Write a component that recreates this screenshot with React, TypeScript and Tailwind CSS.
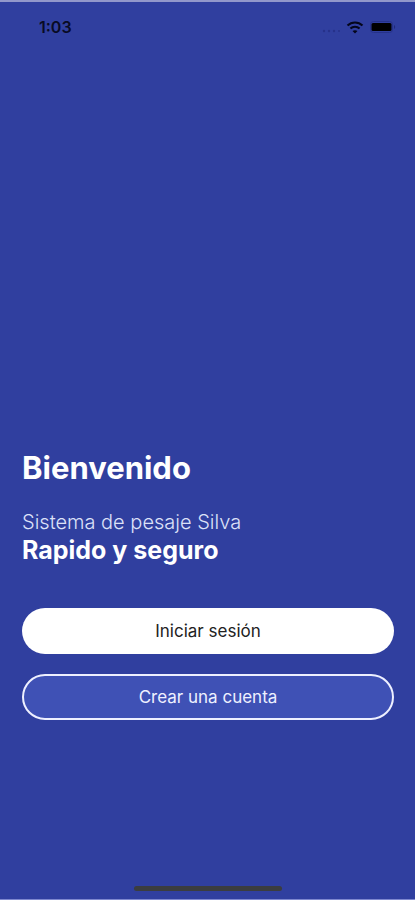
import React from 'react';

interface ActionButtonProps {
    children: string;
    className?: string;
}

const ActionButton: React.FC<ActionButtonProps> = ({ children, className }) => {
    return (
        <button type="button" className={`h-[46px] w-full rounded-full text-[17px] leading-6 ${className}`}>
            {children}
        </button>
    )
}

const StatusBar: React.FC = () => {
    return (
        <header className="flex h-[50px] items-center justify-between pr-[19px] pl-[39px] text-[#080b24]">
            <time className="text-base leading-5 font-semibold">1:03</time>
            <div className="flex items-center gap-1.5">
                <svg width="18" height="6" viewBox="0 0 18 6" className="mt-2" fill="#26328a" aria-hidden="true">
                    <circle cx="2" cy="3" r="1.2" />
                    <circle cx="7" cy="3" r="1.2" />
                    <circle cx="12" cy="3" r="1.2" />
                    <circle cx="17" cy="3" r="1" />
                </svg>
                <svg width="18" height="13" viewBox="0 0 17 13" fill="none" stroke="#04061a" strokeWidth="2.1" aria-hidden="true">
                    <path d="M1 4.6C5.2 .4 11.8 .4 16 4.6" />
                    <path d="M3.9 7.6C6.5 5.1 10.5 5.1 13.1 7.6" />
                    <path d="M8.5 12.6 6 10.1C7.4 8.8 9.6 8.8 11 10.1Z" fill="#04061a" stroke="none" />
                </svg>
                <svg width="26" height="12" viewBox="0 0 26 12" aria-hidden="true">
                    <rect x=".5" y=".5" width="22" height="11" rx="3" fill="none" stroke="#26328a" />
                    <rect x="1.5" y="2" width="20" height="8" rx="1.5" fill="#000" />
                    <path d="M24 4c1.6.6 1.6 3.4 0 4Z" fill="#202b7c" />
                </svg>
            </div>
        </header>
    )
}

const App: React.FC = () => {
    return (
        <div className="flex min-h-screen flex-col border-t-2 border-b border-t-[#9298cb] border-b-[#7e88cf] bg-[#303f9f] font-['Inter','Liberation_Sans',sans-serif] text-white">
            <StatusBar />
            <main className="flex flex-1 flex-col justify-end pr-[21px] pb-[166px] pl-[22px]">
                <h1 className="text-[31px] leading-10 font-bold">Bienvenido</h1>
                <p className="mt-5 text-xl leading-7 font-light text-[#dde1f8]">Sistema de pesaje Silva</p>
                <p className="text-[25px] leading-7 font-bold">Rapido y seguro</p>
                <div className="mt-11 flex flex-col gap-5">
                    <ActionButton className="bg-white text-[#222222]">Iniciar sesión</ActionButton>
                    <ActionButton className="border-2 border-[#eef0ff] bg-[#3f51b5] text-[#eef0ff]">Crear una cuenta</ActionButton>
                </div>
            </main>
            <div className="mb-2 h-[5px] w-[148px] self-center rounded-full bg-[#3b3d3f]" />
        </div>
    )
}

export default App;
